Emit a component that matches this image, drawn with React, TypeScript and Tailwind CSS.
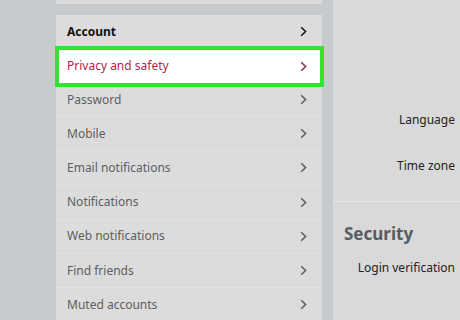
import React from 'react';

const items = [
  'Password',
  'Mobile',
  'Email notifications',
  'Notifications',
  'Web notifications',
  'Find friends',
  'Muted accounts',
];

const Chevron: React.FC<{ color: string }> = ({ color }) => (
  <svg width="7" height="11" viewBox="0 0 7 11" fill="none">
    <path d="M1.2 1.2 L5.6 5.5 L1.2 9.8" stroke={color} strokeWidth="1.6" />
  </svg>
);

const App: React.FC = () => {
  return (
    <div
      className="w-[460px] h-[320px] overflow-hidden flex bg-[#c7cbce] text-[12px]"
      style={{ fontFamily: '"Noto Sans", "Open Sans", sans-serif' }}
    >
      {/* left gutter */}
      <div className="w-[56px] shrink-0" />

      {/* settings menu */}
      <div className="w-[266px] shrink-0 flex flex-col">
        <div className="h-[4px] shrink-0 bg-[#dbdbdb]" />
        <div className="h-[11px] shrink-0" />
        <div className="flex-1 bg-[#dcdcdc] flex flex-col">
          <div className="h-[34px] shrink-0 flex items-center justify-between pl-[11px] pr-[15px] border-b border-[#e3e3e3]">
            <span className="font-bold text-[#111]">Account</span>
            <Chevron color="#1a1a1a" />
          </div>
          <div className="relative z-10 shrink-0 h-[41px] -my-[3.5px] -ml-[1px] -mr-[2px] flex items-center justify-between pl-[8px] pr-[13px] bg-white border-[4px] border-[#33e233]">
            <span className="text-[#b0264a]">Privacy and safety</span>
            <Chevron color="#8a3a50" />
          </div>
          {items.map((label) => (
            <div
              key={label}
              className="h-[34.2px] shrink-0 flex items-center justify-between pl-[11px] pr-[15px] border-b border-[#e3e3e3]"
            >
              <span className="text-[#5b5f63]">{label}</span>
              <Chevron color="#5f6367" />
            </div>
          ))}
        </div>
      </div>

      <div className="w-[11px] shrink-0" />

      {/* right detail panel */}
      <div className="flex-1 bg-[#d9d9d9] flex flex-col text-[#222]">
        <div className="h-[4px] shrink-0 -mt-[12px] pr-[5px] text-right text-[#555] leading-[16px]">Email</div>
        <div className="h-[118px] shrink-0" />
        <div className="h-[20px] shrink-0 flex items-center justify-end pr-[5px]">Language</div>
        <div className="h-[26px] shrink-0" />
        <div className="h-[20px] shrink-0 flex items-center justify-end pr-[5px]">Time zone</div>
        <div className="h-[26px] shrink-0 border-b border-[#e6e6e6]" />
        <div className="h-[20px] shrink-0" />
        <div className="pl-[11px] text-[17px] font-bold text-[#555d64] leading-[24px]">Security</div>
        <div className="h-[12px] shrink-0" />
        <div className="h-[20px] shrink-0 flex items-center justify-end pr-[5px]">Login verification</div>
      </div>
    </div>
  );
};

export default App;
